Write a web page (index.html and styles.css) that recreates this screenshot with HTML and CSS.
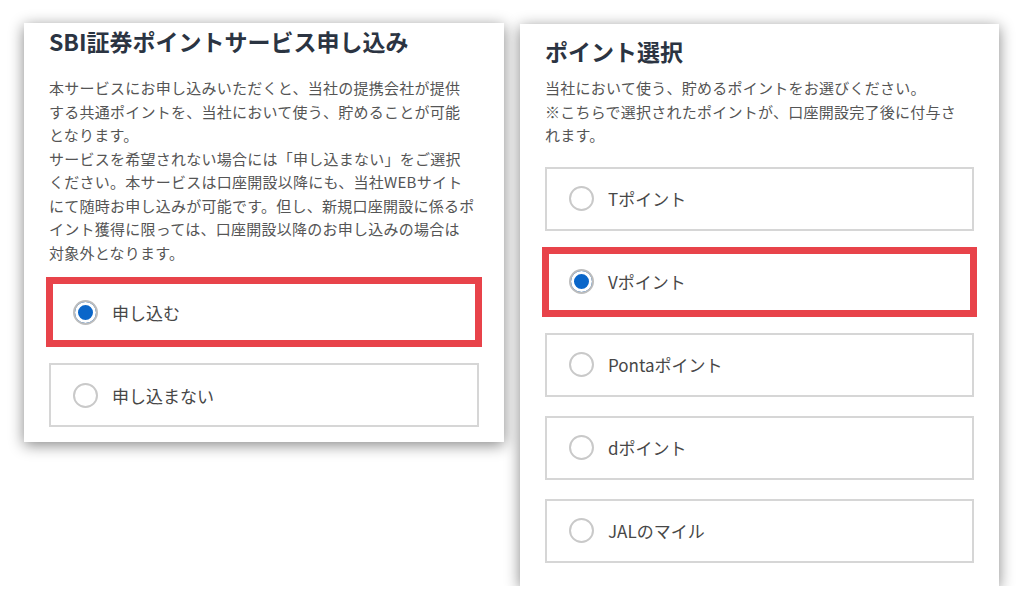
FILE: index.html
```html
<!DOCTYPE html>
<html lang="ja">
<head>
	<meta charset="utf-8">
	<title>ポイントサービス申し込み</title>
	<link rel="stylesheet" href="styles.css">
</head>
<body>
	<div class="board">
		<div class="panel panel_left">
			<h2 class="title">SBI証券ポイントサービス申し込み</h2>
			<p class="lead">
				本サービスにお申し込みいただくと、当社の提携会社が提供<br>
				する共通ポイントを、当社において使う、貯めることが可能<br>
				となります。<br>
				サービスを希望されない場合には「申し込まない」をご選択<br>
				ください。本サービスは口座開設以降にも、当社WEBサイト<br>
				にて随時お申し込みが可能です。但し、新規口座開設に係るポ<br>
				イント獲得に限っては、口座開設以降のお申し込みの場合は<br>
				対象外となります。
			</p>
			<div class="options">
				<div class="option marked"><span class="radio checked"></span>申し込む</div>
				<div class="option"><span class="radio"></span>申し込まない</div>
			</div>
		</div>

		<div class="panel panel_right">
			<h2 class="title">ポイント選択</h2>
			<p class="lead">
				当社において使う、貯めるポイントをお選びください。<br>
				※こちらで選択されたポイントが、口座開設完了後に付与さ<br>
				れます。
			</p>
			<div class="options">
				<div class="option"><span class="radio"></span>Tポイント</div>
				<div class="option marked"><span class="radio checked"></span>Vポイント</div>
				<div class="option"><span class="radio"></span>Pontaポイント</div>
				<div class="option"><span class="radio"></span>dポイント</div>
				<div class="option"><span class="radio"></span>JALのマイル</div>
			</div>
		</div>
	</div>
</body>
</html>
```

FILE: styles.css
```css
body {
	margin: 0;
	background-color: #ffffff;
	font-family: "Noto Sans CJK JP", "Noto Sans", sans-serif;
}

.board {
	display: flex;
	align-items: flex-start;
	gap: 16px;

	padding-top: 23px;
	padding-left: 24px;
}

.panel {
	background-color: #ffffff;
	box-shadow: 0 3px 14px rgba(0, 0, 0, 0.48);

	padding-left: 25px;
	padding-right: 25px;
}
.panel_left {
	width: 430px;
	padding-top: 3px;
	padding-bottom: 15px;
}
.panel_right {
	width: 429px;
	margin-top: 1px;
	padding-top: 12px;
	padding-bottom: 23px;
}

.title {
	margin: 0;
	font-size: 23px;
	line-height: 30px;
	font-weight: bold;
	color: #2b3442;
}

.lead {
	margin: 0;
	font-size: 15px;
	line-height: 23.5px;
	letter-spacing: 0.25px;
	color: #555555;
	white-space: nowrap;
}
.panel_left .lead {
	margin-top: 20px;
	margin-bottom: 16px;
}
.panel_right .lead {
	margin-top: 10px;
	margin-bottom: 20px;
}

.options {
	display: flex;
	flex-direction: column;
	gap: 19px;
}

.option {
	display: flex;
	align-items: center;
	gap: 14px;

	height: 64px;
	box-sizing: border-box;
	padding-left: 22px;

	border: 2px solid #d6d6d6;

	font-size: 17px;
	color: #474747;
}

/* red highlight frame drawn round the chosen row */
.marked {
	outline: 7px solid #e8434a;
	outline-offset: -4px;
}

.radio {
	width: 25px;
	height: 25px;
	box-sizing: border-box;
	border: 2px solid #c9c9c9;
	border-radius: 50%;
	background-color: #ffffff;
	flex-shrink: 0;
}
.radio.checked {
	background-color: #0a66c9;
	box-shadow: inset 0 0 0 3px #ffffff;
	border-color: #bdbdbd;
}
```
